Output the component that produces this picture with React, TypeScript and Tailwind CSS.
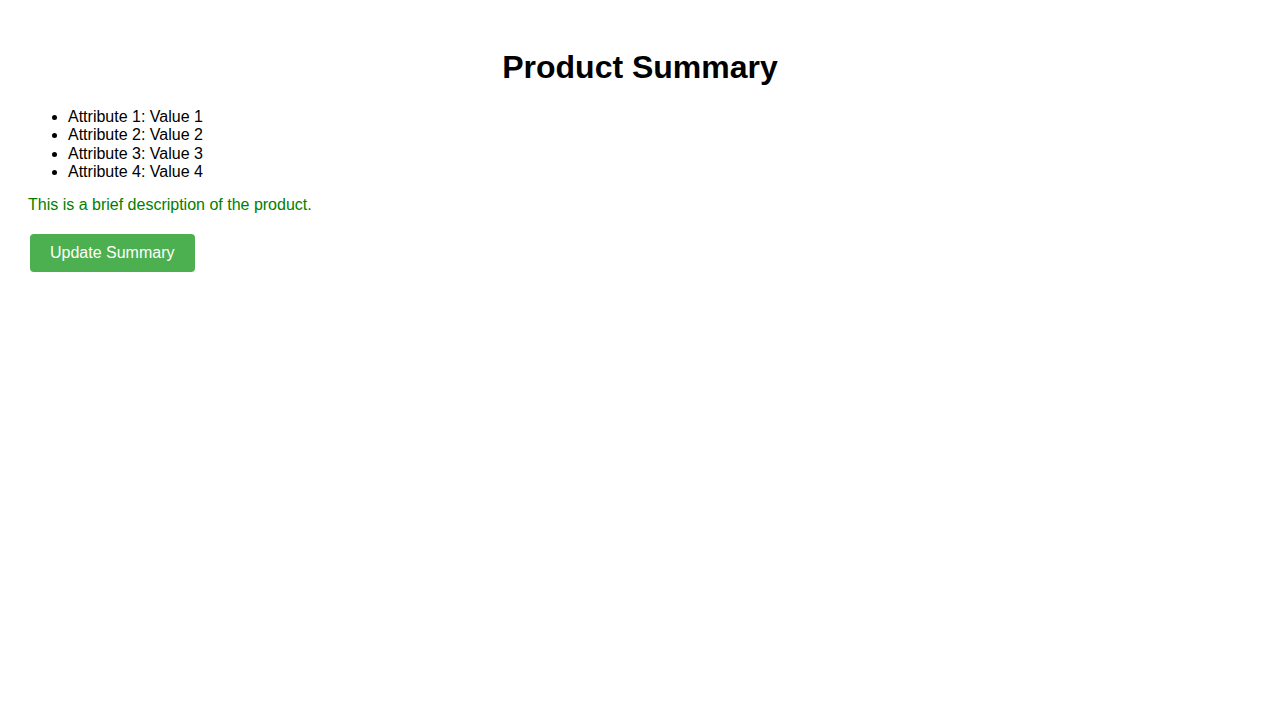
export default function App() {
  return (
    <div className="min-h-screen bg-white p-[28px] text-black" style={{ fontFamily: '"Liberation Sans", Arial, sans-serif' }}>
      <h1 className="mt-[21px] mb-[22px] text-center text-[32px] font-bold leading-[37px]">Product Summary</h1>
      <ul className="list-disc pl-[40px] text-[16px] leading-[18.4px]">
        <li>Attribute 1: Value 1</li>
        <li>Attribute 2: Value 2</li>
        <li>Attribute 3: Value 3</li>
        <li>Attribute 4: Value 4</li>
      </ul>
      <p className="mt-[14px] mb-[20px] text-[16px] leading-[18.4px] text-[#008000]">This is a brief description of the product.</p>
      <button className="ml-[2px] block rounded-[4px] bg-[#4CAF50] px-[20px] py-[10px] text-[16px] leading-[18.4px] text-white">Update Summary</button>
    </div>
  );
}
